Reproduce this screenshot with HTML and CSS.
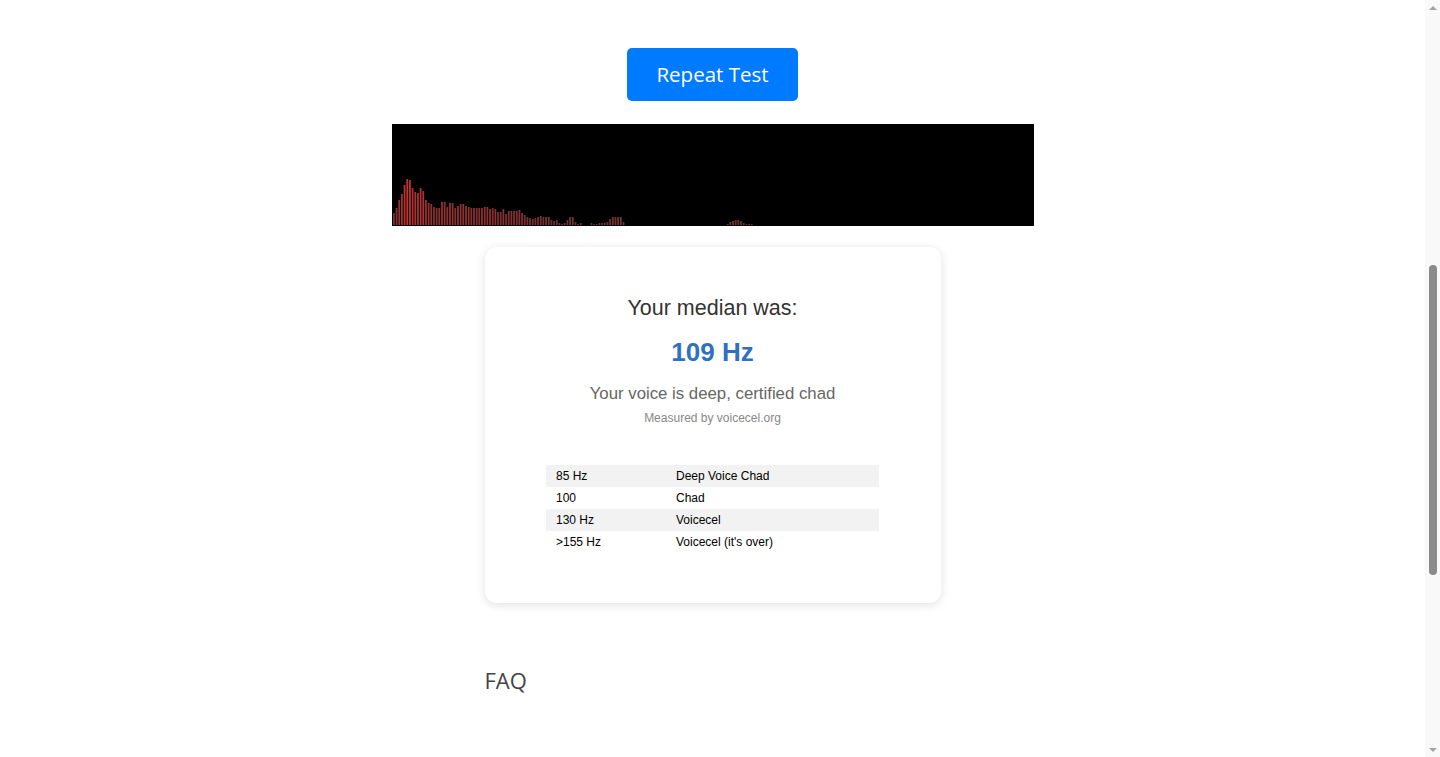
FILE: index.html
```html
<!DOCTYPE html>
<html lang="en">
<head>
<meta charset="utf-8">
<title>Voice Pitch Test</title>
<link rel="stylesheet" href="styles.css">
</head>
<body>
<header class="intro">
  <h1 class="intro-title">Voice Pitch Test</h1>
  <p class="intro-text">Find out your median voice pitch. Press start and read the passage out loud.</p>
</header>
<main class="test">
  <button class="repeat-btn" type="button">Repeat Test</button>
  <canvas class="spectrum" id="spectrum" width="642" height="102"></canvas>
  <section class="result-card">
    <h2 class="result-label">Your median was:</h2>
    <p class="result-value">109 Hz</p>
    <p class="result-verdict">Your voice is deep, certified chad</p>
    <p class="result-source">Measured by voicecel.org</p>
    <table class="scale">
      <colgroup><col class="scale-col-hz"><col></colgroup>
      <tbody>
        <tr><td>85 Hz</td><td>Deep Voice Chad</td></tr>
        <tr><td>100</td><td>Chad</td></tr>
        <tr><td>130 Hz</td><td>Voicecel</td></tr>
        <tr><td>&gt;155 Hz</td><td>Voicecel (it's over)</td></tr>
      </tbody>
    </table>
  </section>
</main>
<section class="faq">
  <h2 class="faq-title">FAQ</h2>
  <div class="faq-list">
    <h3 class="faq-q">How is my pitch measured?</h3>
    <p class="faq-a">Your microphone input is analysed in the browser and the median fundamental frequency is reported.</p>
    <h3 class="faq-q">Is my recording uploaded?</h3>
    <p class="faq-a">No. Everything happens locally on your device.</p>
  </div>
</section>
<div class="scrollbar" aria-hidden="true">
  <span class="sb-arrow sb-up"></span>
  <div class="sb-track"><div class="sb-thumb"></div></div>
  <span class="sb-arrow sb-down"></span>
</div>
<script src="script.js"></script>
</body>
</html>
```

FILE: styles.css
```css
html, body {
  margin: 0;
  padding: 0;
  background: #fff;
}

body {
  padding-right: 15px;
  font-family: "Open Sans", "Noto Sans", Arial, sans-serif;
  color: #333;
}

/* window scrollbar (classic style) */
.scrollbar {
  position: fixed;
  top: 0;
  right: 0;
  width: 15px;
  height: 100vh;
  display: flex;
  flex-direction: column;
  background: #f9f9f9;
  z-index: 10;
}

.sb-arrow {
  flex: none;
  height: 15px;
  display: flex;
  justify-content: center;
}

.sb-up {
  align-items: center;
}

.sb-down {
  align-items: center;
}

.sb-up::before,
.sb-down::before {
  content: "";
  width: 0;
  height: 0;
  border-left: 4px solid transparent;
  border-right: 4px solid transparent;
}

.sb-up::before {
  border-bottom: 4px solid #a3a3a3;
}

.sb-down::before {
  border-top: 4px solid #a3a3a3;
}

.sb-track {
  flex: 1;
  padding-top: 250px;
}

.sb-thumb {
  width: 8px;
  height: 310px;
  margin: 0 auto;
  border-radius: 4px;
  background: #8b8b8b;
}

.intro {
  box-sizing: border-box;
  height: 610px;
  width: 456px;
  margin: 0 auto;
  padding-top: 80px;
}

.intro-title {
  margin: 0 0 16px;
  font-size: 32px;
  font-weight: 600;
  color: #333;
}

.intro-text {
  margin: 0;
  font-size: 16px;
  color: #555;
}

.test {
  display: flex;
  flex-direction: column;
  align-items: center;
  padding-top: 48px;
}

.repeat-btn {
  box-sizing: border-box;
  width: 171px;
  height: 53px;
  padding: 0;
  border: none;
  border-radius: 5px;
  background: #007bff;
  color: #fff;
  font-family: "Open Sans", "Noto Sans", Arial, sans-serif;
  font-size: 20.5px;
  font-weight: 500;
  line-height: 53px;
  cursor: pointer;
}

.spectrum {
  display: block;
  width: 642px;
  height: 102px;
  margin-top: 23px;
  background: #000;
}

.result-card {
  box-sizing: border-box;
  width: 456px;
  margin-top: 21px;
  padding: 48px 61px 50px;
  background: #fff;
  border-radius: 12px;
  box-shadow: 0 2px 10px rgba(0, 0, 0, 0.12);
  font-family: "Liberation Sans", Arial, sans-serif;
  text-align: center;
}

.result-label {
  margin: 0;
  font-size: 21.5px;
  line-height: 26px;
  font-weight: normal;
  color: #333;
}

.result-value {
  margin: 16px 0 0;
  font-size: 26px;
  line-height: 30px;
  font-weight: bold;
  color: #3070c2;
}

.result-verdict {
  margin: 16px 0 0;
  font-size: 16.8px;
  line-height: 21px;
  color: #666;
}

.result-source {
  margin: 7px 0 0;
  font-size: 12px;
  line-height: 14px;
  color: #888;
}

.scale {
  width: 333px;
  margin: 40px auto 0;
  border-collapse: collapse;
  table-layout: fixed;
  text-align: left;
  font-size: 12px;
  color: #000;
}

.scale-col-hz {
  width: 120px;
}

.scale td {
  height: 22px;
  padding: 0 10px;
  line-height: 22px;
}

.scale tr:nth-child(odd) td {
  background: #f2f2f2;
}

.faq {
  box-sizing: border-box;
  width: 456px;
  margin: 0 auto;
  padding-top: 64px;
  min-height: 562px;
}

.faq-title {
  margin: 0;
  font-size: 22px;
  line-height: 26px;
  font-weight: normal;
  color: #444;
}

.faq-list {
  padding-top: 120px;
}

.faq-q {
  margin: 0 0 8px;
  font-size: 17px;
  font-weight: 600;
  color: #333;
}

.faq-a {
  margin: 0 0 24px;
  font-size: 15px;
  color: #555;
}
```

FILE: script.js
```js
(function () {
  var canvas = document.getElementById('spectrum');
  var ctx = canvas.getContext('2d');
  var W = canvas.width, H = canvas.height;
  ctx.fillStyle = '#000';
  ctx.fillRect(0, 0, W, H);

  var first = [12,17,25,31,40,46,45,37,33,32,37,34,25,22,21,18,17,17,23,23,18,22,22,17,19,21,21,19,18,17,17,17,17,17,18,18,16,17,16,13,13,16,11,14,14,14,14,15,12,10,8,7,6,7,8,9,8,8,8,5,4,5,2,1,2,5,8,8,3,1,2,0,0,0,2,1,1,2,2,2,3,6,8,8,8,8,3];
  var heights = first.slice();
  while (heights.length < 125) heights.push(0);
  heights = heights.concat([1,3,4,5,5,4,2,1,1,1]);

  var pitch = 2.67, barW = 1.8;
  for (var i = 0; i < heights.length; i++) {
    var h = heights[i];
    if (h <= 0) continue;
    ctx.fillStyle = 'rgb(' + (2 * h + 100) + ',50,50)';
    ctx.fillRect(1 + i * pitch, H - 1 - h, barW, h);
  }

  var btn = document.querySelector('.repeat-btn');
  var y = btn.getBoundingClientRect().top + window.scrollY - 48;
  window.scrollTo(0, y);
})();
```
